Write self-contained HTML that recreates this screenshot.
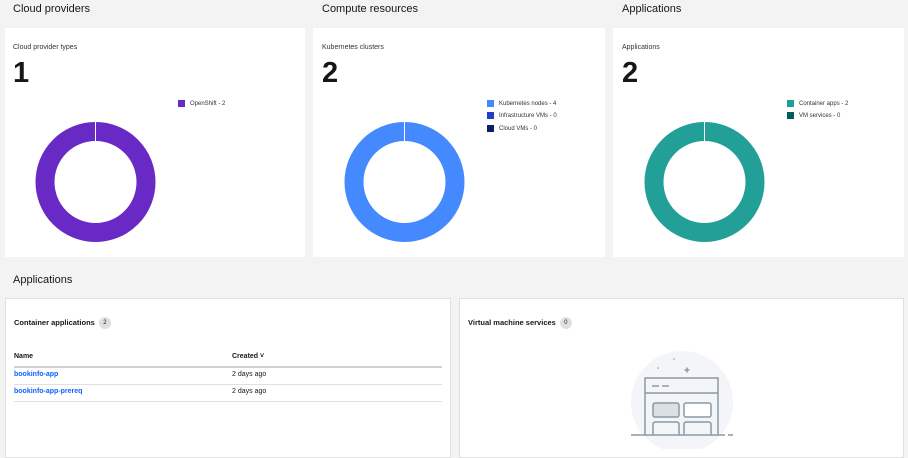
<!DOCTYPE html>
<html><head><style>
*{margin:0;padding:0;box-sizing:border-box}
body{width:908px;height:449px;background:#f3f3f3;font-family:"Liberation Sans",sans-serif;position:relative;overflow:hidden;color:#161616}
.a{position:absolute}
.card{position:absolute;background:#fff}
.h{font-size:11px;color:#161616}
.sub{font-size:7px;color:#333}
.num{font-size:29px;font-weight:bold;color:#161616}
.lg{font-size:6px;color:#333;display:flex;align-items:center}
.lg i{display:inline-block;width:7px;height:7px;margin-right:5px}
.badge{display:inline-block;width:12px;height:12px;border-radius:6px;background:#e0e0e0;font-size:6px;text-align:center;line-height:12px;font-weight:normal;margin-left:4px;vertical-align:middle}
.t{font-size:7px}
</style></head><body>
<div class="a h" style="left:13px;top:3px">Cloud providers</div>
<div class="a h" style="left:322px;top:3px">Compute resources</div>
<div class="a h" style="left:622px;top:3px">Applications</div>

<div class="card" style="left:5px;top:28px;width:300px;height:229px"></div>
<div class="card" style="left:313px;top:28px;width:292px;height:229px"></div>
<div class="card" style="left:613px;top:28px;width:291px;height:229px"></div>

<div class="a sub" style="left:13px;top:44px">Cloud provider types</div>
<div class="a num" style="left:13px;top:57px">1</div>
<div class="a lg" style="left:178px;top:100px"><i style="background:#6929c4"></i>OpenShift - 2</div>

<div class="a sub" style="left:322px;top:44px">Kubernetes clusters</div>
<div class="a num" style="left:322px;top:57px">2</div>
<div class="a lg" style="left:487px;top:100px"><i style="background:#4589ff"></i>Kubernetes nodes - 4</div>
<div class="a lg" style="left:487px;top:112px"><i style="background:#1f3fc9"></i>Infrastructure VMs - 0</div>
<div class="a lg" style="left:487px;top:125px"><i style="background:#0a1f66"></i>Cloud VMs - 0</div>

<div class="a sub" style="left:622px;top:44px">Applications</div>
<div class="a num" style="left:622px;top:57px">2</div>
<div class="a lg" style="left:787px;top:100px"><i style="background:#1f9e97"></i>Container apps - 2</div>
<div class="a lg" style="left:787px;top:112px"><i style="background:#005d5d"></i>VM services - 0</div>

<svg class="a" style="left:0;top:0" width="908" height="260">
<circle cx="95.5" cy="182" r="50.5" fill="none" stroke="#6929c4" stroke-width="19"/>
<line x1="95.5" y1="121" x2="95.5" y2="141" stroke="#fff" stroke-width="1"/>
<circle cx="404.5" cy="182" r="50.5" fill="none" stroke="#4589ff" stroke-width="19"/>
<line x1="404.5" y1="121" x2="404.5" y2="141" stroke="#fff" stroke-width="1"/>
<circle cx="704.5" cy="182" r="50.5" fill="none" stroke="#22a098" stroke-width="19"/>
<line x1="704.5" y1="121" x2="704.5" y2="141" stroke="#fff" stroke-width="1"/>
</svg>

<div class="a h" style="left:13px;top:274px">Applications</div>
<div class="card" style="left:5px;top:298px;width:446px;height:160px;border:1px solid #e0e0e0"></div>
<div class="card" style="left:459px;top:298px;width:445px;height:160px;border:1px solid #e0e0e0"></div>

<div class="a t" style="left:14px;top:317px;font-weight:bold;font-size:7.5px">Container applications<span class="badge">2</span></div>
<div class="a t" style="left:14px;top:353px;font-weight:bold">Name</div>
<div class="a t" style="left:232px;top:353px;font-weight:bold">Created ˅</div>
<div class="a" style="left:14px;top:366px;width:428px;height:2px;background:#d0d0d0"></div>
<div class="a t" style="left:14px;top:371px;color:#0f62fe;font-weight:bold">bookinfo-app</div>
<div class="a t" style="left:232px;top:371px">2 days ago</div>
<div class="a" style="left:14px;top:384px;width:428px;height:1px;background:#e0e0e0"></div>
<div class="a t" style="left:14px;top:388px;color:#0f62fe;font-weight:bold">bookinfo-app-prereq</div>
<div class="a t" style="left:232px;top:388px">2 days ago</div>
<div class="a" style="left:14px;top:401px;width:428px;height:1px;background:#e0e0e0"></div>

<div class="a t" style="left:468px;top:317px;font-weight:bold;font-size:7.5px">Virtual machine services<span class="badge">0</span></div>

<svg class="a" style="left:600px;top:340px" width="160" height="109">
<circle cx="82" cy="62" r="51" fill="#f4f5f8"/>
<g fill="none" stroke="#8a9aa6" stroke-width="1.5">
<path d="M45 95 L45 38 L118 38 L118 95"/>
<line x1="45" y1="53" x2="118" y2="53"/>
<line x1="52" y1="46" x2="59" y2="46"/><line x1="62" y1="46" x2="69" y2="46"/>
<rect x="53" y="63" width="26" height="14" rx="2" fill="#dde0e3"/>
<rect x="84" y="63" width="27" height="14" rx="2" fill="#fff"/>
<path d="M53 95 V84 a2 2 0 0 1 2-2 H77 a2 2 0 0 1 2 2 V95"/>
<path d="M84 95 V84 a2 2 0 0 1 2-2 H109 a2 2 0 0 1 2 2 V95"/>
<line x1="31" y1="95" x2="125" y2="95"/>
<line x1="128" y1="95" x2="133" y2="95"/>
<line x1="84.5" y1="30" x2="89.5" y2="30"/><line x1="87" y1="27.5" x2="87" y2="32.5"/>
</g>
<circle cx="58" cy="28" r="0.8" fill="#8a9aa6"/><circle cx="74" cy="19" r="0.8" fill="#8a9aa6"/>
</svg>
</body></html>
